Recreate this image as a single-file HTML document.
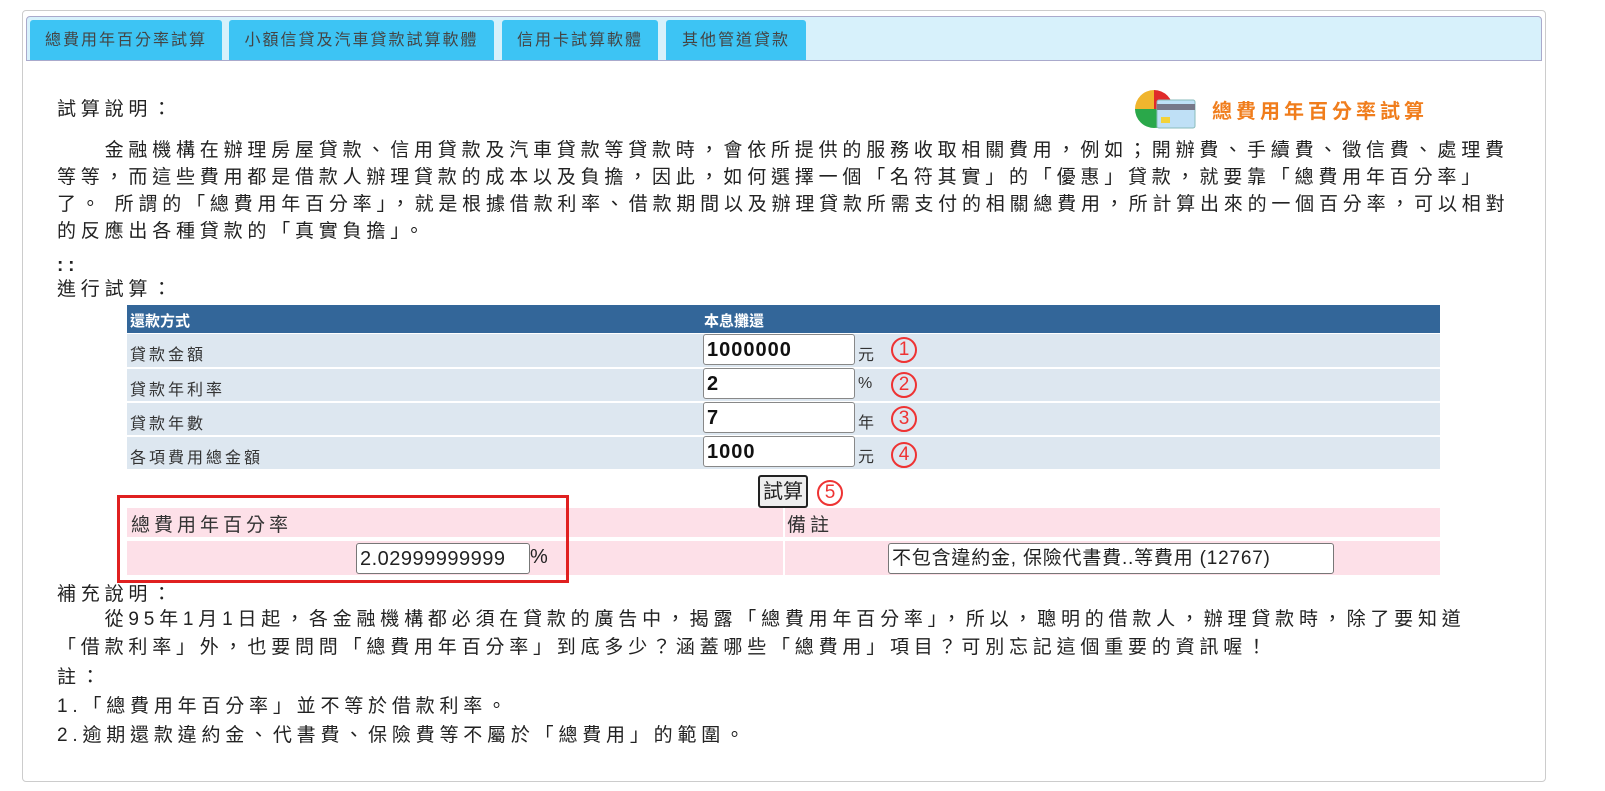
<!DOCTYPE html>
<html><head><meta charset="utf-8"><style>
body{margin:0;background:#fff;font-family:"Liberation Sans","Noto Sans CJK TC",sans-serif;color:#222;width:1605px;height:791px;overflow:hidden;position:relative}
.abs{position:absolute}
.outer{left:22px;top:10px;width:1522px;height:770px;border:1px solid #ccc;border-radius:4px}
.tabbar{left:26px;top:16px;width:1514px;height:43px;background:#d7f1fb;border:1px solid #aac;border-radius:4px 4px 0 0}
.tab{top:20px;height:40px;background:#3dc4f4;color:#444;font-size:16px;letter-spacing:2px;line-height:42px;text-align:center;border-radius:3px 3px 0 0}
.t{font-size:19px;letter-spacing:4.8px;white-space:nowrap;line-height:27px}
.row{left:127px;width:1313px;background:#dde7f0;font-size:16px;letter-spacing:3px;color:#333}
.row span{position:absolute;left:3px;top:7px}
.inp{left:703px;width:152px;height:31px;border:1px solid #888;border-radius:3px;background:#fff;font-weight:bold;font-size:20px;letter-spacing:1px;line-height:31px;padding-left:3px;box-sizing:border-box;color:#111}
.unit{left:858px;font-size:16px;color:#333}
.c{width:26px;height:26px;border:2px solid #e33;border-radius:50%;color:#e33;font-size:19px;text-align:center;box-sizing:border-box;line-height:22px}
.pink{background:#fde0e8}
</style></head><body>
<div class="abs outer"></div>
<div class="abs tabbar"></div>
<div class="abs tab" style="left:30px;width:192px">總費用年百分率試算</div>
<div class="abs tab" style="left:229px;width:265px">小額信貸及汽車貸款試算軟體</div>
<div class="abs tab" style="left:502px;width:156px">信用卡試算軟體</div>
<div class="abs tab" style="left:666px;width:140px">其他管道貸款</div>

<svg class="abs" style="left:1134px;top:88px" width="64" height="42" viewBox="0 0 64 42">
<path d="M20 2 A19 19 0 0 1 39 21 L20 21Z" fill="#e02a2a"/>
<path d="M20 2 A19 19 0 0 0 1 21 L20 21Z" fill="#f0b52e"/>
<path d="M1 21 A19 19 0 0 0 39 21 L20 21Z" fill="#2aa84a"/>
<rect x="23" y="12" width="38" height="28" rx="2" fill="#bfe0f6" stroke="#8bb" stroke-width="1"/>
<rect x="23" y="16" width="38" height="6" fill="#778"/>
<rect x="27" y="29" width="9" height="6" fill="#f3d23a"/>
</svg>
<div class="abs" style="left:1212px;top:95px;color:#f07d1c;font-weight:bold;font-size:20px;letter-spacing:4px">總費用年百分率試算</div>

<div class="abs t" style="left:57px;top:96px">試算說明：</div>
<div class="abs t" style="left:57px;top:137px;line-height:27px">　　金融機構在辦理房屋貸款、信用貸款及汽車貸款等貸款時，會依所提供的服務收取相關費用，例如；開辦費、手續費、徵信費、處理費<br>等等，而這些費用都是借款人辦理貸款的成本以及負擔，因此，如何選擇一個「名符其實」的「優惠」貸款，就要靠「總費用年百分率」<br>了。 所謂的「總費用年百分率」，就是根據借款利率、借款期間以及辦理貸款所需支付的相關總費用，所計算出來的一個百分率，可以相對<br>的反應出各種貸款的「真實負擔」。</div>
<div class="abs t" style="left:57px;top:252px;font-weight:bold">::</div>
<div class="abs t" style="left:57px;top:276px">進行試算：</div>

<div class="abs" style="left:127px;top:305px;width:1313px;height:28px;background:#336699;color:#fff;font-weight:bold;font-size:15px">
<span class="abs" style="left:3px;top:5px">還款方式</span><span class="abs" style="left:577px;top:5px">本息攤還</span></div>
<div class="abs row" style="top:334px;height:33px"><span>貸款金額</span></div>
<div class="abs row" style="top:369px;height:32px"><span>貸款年利率</span></div>
<div class="abs row" style="top:403px;height:32px"><span>貸款年數</span></div>
<div class="abs row" style="top:437px;height:32px"><span>各項費用總金額</span></div>
<div class="abs inp" style="top:334px">1000000</div>
<div class="abs inp" style="top:368px">2</div>
<div class="abs inp" style="top:402px">7</div>
<div class="abs inp" style="top:436px">1000</div>
<div class="abs unit" style="top:341px">元</div>
<div class="abs unit" style="top:375px">%</div>
<div class="abs unit" style="top:409px">年</div>
<div class="abs unit" style="top:443px">元</div>
<div class="abs c" style="left:891px;top:337px">1</div>
<div class="abs c" style="left:891px;top:372px">2</div>
<div class="abs c" style="left:891px;top:406px">3</div>
<div class="abs c" style="left:891px;top:442px">4</div>
<div class="abs" style="left:758px;top:475px;width:50px;height:33px;border:2px solid #222;border-radius:3px;background:#eee;font-size:20px;line-height:30px;text-align:center;box-sizing:border-box">試算</div>
<div class="abs c" style="left:817px;top:480px">5</div>

<div class="abs pink" style="left:127px;top:508px;width:1313px;height:29px"></div>
<div class="abs pink" style="left:127px;top:541px;width:1313px;height:34px"></div>
<div class="abs" style="left:783px;top:508px;width:2px;height:67px;background:#fff"></div>
<div class="abs" style="left:131px;top:510px;font-size:19px;letter-spacing:4px;color:#333">總費用年百分率</div>
<div class="abs" style="left:787px;top:510px;font-size:19px;letter-spacing:4px;color:#333">備註</div>
<div class="abs" style="left:356px;top:543px;width:174px;height:31px;border:1px solid #777;border-radius:3px;background:#fff;font-size:20px;letter-spacing:0.5px;line-height:30px;padding-left:3px;box-sizing:border-box;overflow:hidden;white-space:nowrap">2.02999999999</div>
<div class="abs" style="left:530px;top:546px;font-size:20px">%</div>
<div class="abs" style="left:888px;top:543px;width:446px;height:31px;border:1px solid #777;border-radius:3px;background:#fff;font-size:19px;letter-spacing:0.8px;line-height:30px;padding-left:3px;box-sizing:border-box;overflow:hidden;white-space:nowrap">不包含違約金, 保險代書費..等費用 (12767)</div>
<div class="abs" style="left:117px;top:495px;width:446px;height:82px;border:3px solid #e02020"></div>

<div class="abs t" style="left:57px;top:581px">補充說明：</div>
<div class="abs t" style="left:57px;top:606px;line-height:28px">　　從95年1月1日起，各金融機構都必須在貸款的廣告中，揭露「總費用年百分率」，所以，聰明的借款人，辦理貸款時，除了要知道<br>「借款利率」外，也要問問「總費用年百分率」到底多少？涵蓋哪些「總費用」項目？可別忘記這個重要的資訊喔！</div>
<div class="abs t" style="left:57px;top:664px">註：</div>
<div class="abs t" style="left:57px;top:693px">1.「總費用年百分率」並不等於借款利率。</div>
<div class="abs t" style="left:57px;top:722px">2.逾期還款違約金、代書費、保險費等不屬於「總費用」的範圍。</div>
</body></html>
